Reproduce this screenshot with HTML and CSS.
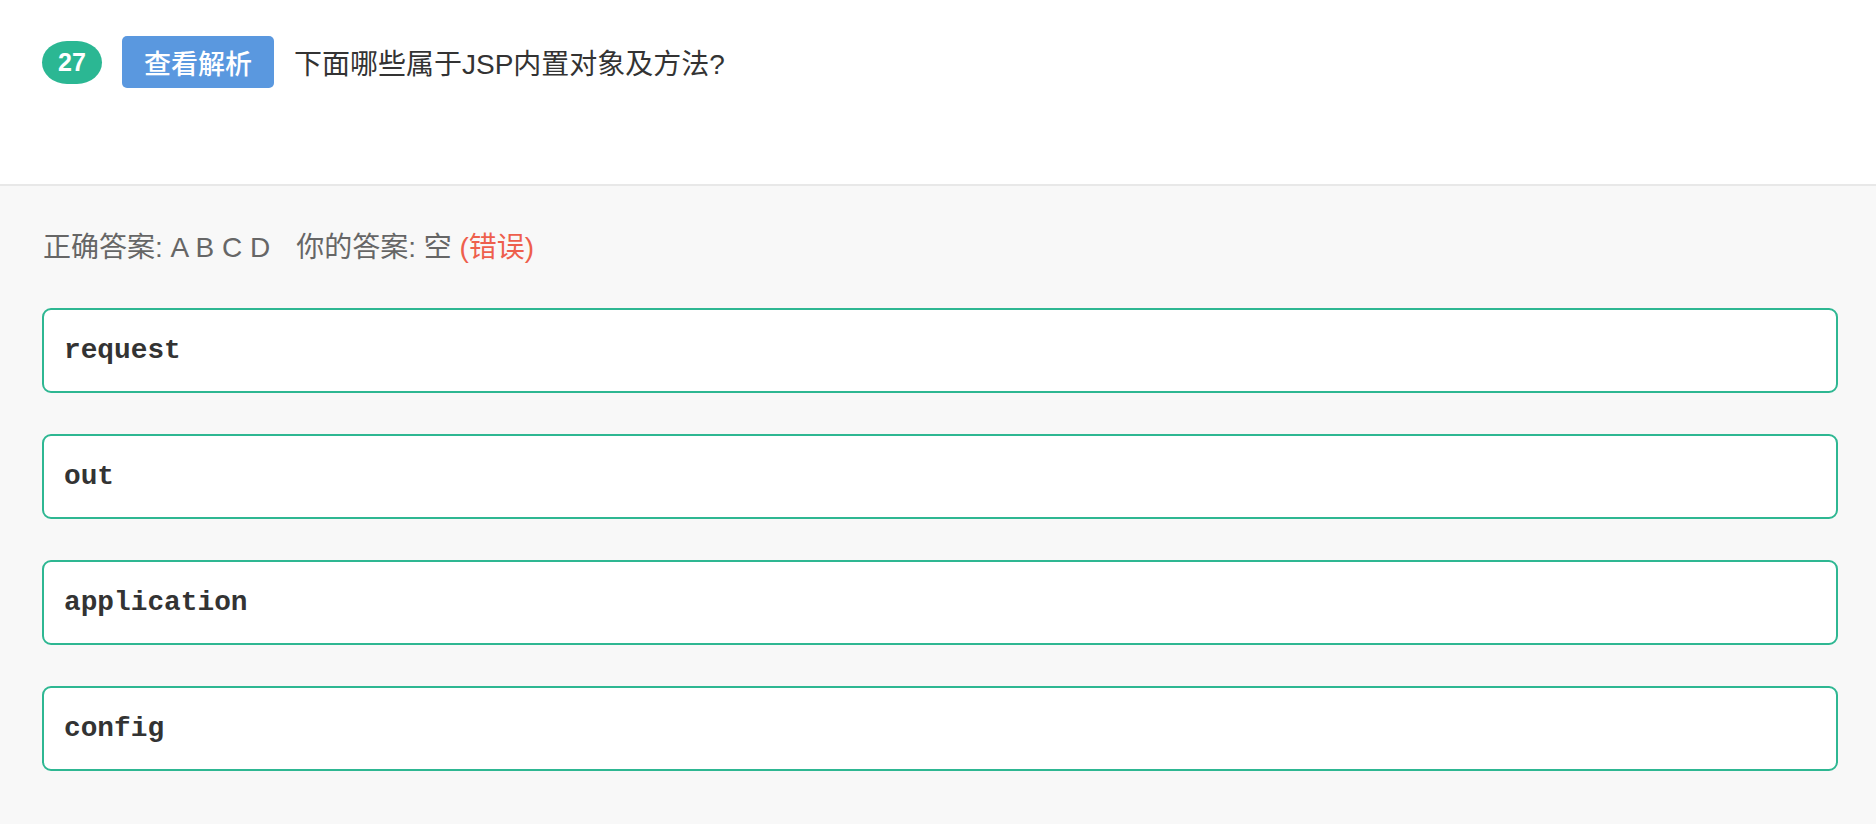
FILE: index.html
```html
<!DOCTYPE html>
<html lang="zh-CN">
<head>
<meta charset="utf-8">
<title>Question 27</title>
<link rel="stylesheet" href="styles.css">
</head>
<body>
<div class="question">
  <div class="question-head">
    <span class="q-num">27</span>
    <span class="q-btn">查看解析</span>
    <span class="q-title">下面哪些属于JSP内置对象及方法?</span>
  </div>
</div>
<div class="answer-area">
  <div class="answer-line">
    <span class="correct">正确答案: A B C D</span><span class="yours">你的答案: 空 <span class="wrong">(错误)</span></span>
  </div>
  <ul class="options">
    <li class="option">request</li>
    <li class="option">out</li>
    <li class="option">application</li>
    <li class="option">config</li>
  </ul>
</div>
</body>
</html>
```
FILE: styles.css
```css
html, body {
  margin: 0;
  padding: 0;
}
body {
  background: #f8f8f8;
  font-family: "Liberation Sans", "Noto Sans CJK SC", sans-serif;
  color: #333;
}
.question {
  background: #fff;
  height: 184px;
  border-bottom: 2px solid #e8e8e8;
  box-sizing: content-box;
}
.question-head {
  display: flex;
  align-items: center;
  padding: 36px 0 0 42px;
  height: 52px;
}
.q-num {
  display: flex;
  align-items: center;
  justify-content: center;
  width: 60px;
  height: 43px;
  border-radius: 25px / 21.5px;
  background: #2bb793;
  color: #fff;
  font-size: 25px;
  font-weight: bold;
  margin-top: 1px;
}
.q-btn {
  display: flex;
  align-items: center;
  justify-content: center;
  margin-left: 20px;
  width: 152px;
  height: 52px;
  border-radius: 5px;
  background: #5a98df;
  color: #fff;
  font-size: 27px;
  font-weight: 500;
}
.q-title {
  margin-left: 20px;
  font-size: 28px;
  color: #333;
}
.answer-area {
  padding: 44px 38px 0 42px;
}
.answer-line {
  font-size: 28px;
  line-height: 36px;
  color: #666;
  padding-left: 1px;
}
.yours {
  margin-left: 26px;
}
.wrong {
  color: #ee5f4c;
}
.options {
  list-style: none;
  margin: 42px 0 0 0;
  padding: 0;
  display: flex;
  flex-direction: column;
  gap: 41px;
}
.option {
  height: 85px;
  box-sizing: border-box;
  border: 2px solid #2eb792;
  border-radius: 9px;
  background: #fff;
  display: flex;
  align-items: center;
  padding-left: 20px;
  font-family: "Liberation Mono", monospace;
  font-size: 27.8px;
  font-weight: bold;
  color: #333;
}
```
